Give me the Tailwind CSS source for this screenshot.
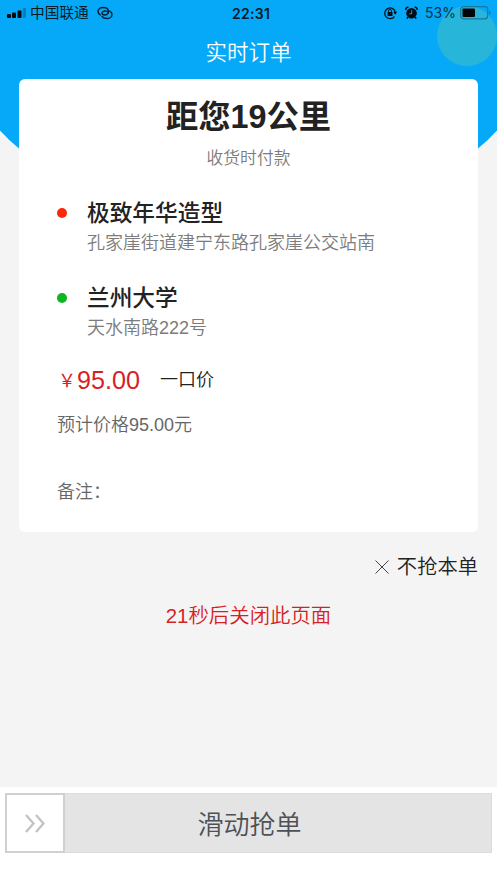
<!DOCTYPE html>
<html lang="zh-CN">
<head>
<meta charset="utf-8">
<meta name="viewport" content="width=device-width, initial-scale=1">
<title>实时订单</title>
<script src="https://cdn.jsdelivr.net/npm/@tailwindcss/browser@4"></script>
</head>
<body class="relative isolate flex h-[883px] w-[497px] flex-col overflow-hidden bg-[#f4f4f4] font-['Liberation_Sans','Noto_Sans_CJK_SC',sans-serif] text-[#222]">
  <!-- curved header background -->
  <svg class="absolute left-0 top-0 -z-10" width="497" height="220" viewBox="0 0 497 220" aria-hidden="true">
    <path d="M0 0H497V130.500Q488 140.500 478 148.500Q380 210 248.500 210Q117 210 19 148.500Q9 140.500 0 130.500Z" fill="#05a9f8"/>
    <circle cx="467" cy="36" r="30" fill="#28b5da"/>
  </svg>

  <header class="relative h-[79px] shrink-0">
    <div class="flex h-[25px] items-center justify-between pl-[7px] pr-[6px] text-[#071a28]">
      <div class="flex w-[225px] items-center">
        <svg width="19" height="10" viewBox="0 0 19 10" fill="#03090e">
          <rect x="0" y="6" width="4" height="4" rx="1"/><rect x="5" y="4.500" width="4" height="5.500" rx="1"/><rect x="10.500" y="2.500" width="4" height="7.500" rx="1"/><rect x="15.700" y="0" width="3.300" height="10" rx="1" fill="#087db7"/>
        </svg>
        <span class="ml-[4px] mt-[2px] text-[14.700px] leading-[25px]">中国联通</span>
        <svg class="ml-[8px]" width="16" height="14" viewBox="0 0 16 14" fill="none" stroke="#062439" stroke-width="1.500" stroke-linecap="round">
          <path d="M3.300 8.900C1.800 8.300 1 7.100 1 5.600C1 3.200 3.300 1.500 6.300 1.500C9.300 1.500 11.400 3.200 11.400 5.500C11.400 7.700 9.700 8.900 7.400 8.900C5.800 8.900 5 8.100 5 7.100C5 6.200 5.900 5.500 7.300 5.100"/>
          <path d="M12.700 5.100C14.200 5.700 15 6.900 15 8.400C15 10.800 12.700 12.500 9.700 12.500C7.600 12.500 5.900 11.700 5.100 10.500M7.300 5.100C9.500 4.700 11.200 5.500 11.200 7"/>
        </svg>
      </div>
      <span class="mt-px font-['Inter',sans-serif] text-[14px] font-semibold leading-[25px] tracking-[.3px]">22:31</span>
      <div class="flex flex-1 items-center justify-end">
        <svg width="15" height="14" viewBox="0 0 15 14" fill="none" stroke="#06131d" stroke-width="1.300">
          <path d="M11.500 10.500A5.400 5.400 0 1 1 12.300 5.700"/><path d="M10.200 5.800H14.200L12.200 8.700Z" fill="#06131d" stroke="none"/>
          <rect x="4.500" y="6" width="5" height="4" rx=".5" fill="#06131d" stroke="none"/><path d="M5.500 6.300V5Q5.500 3.400 7 3.400T8.500 5V6.300" stroke-width="1"/>
        </svg>
        <svg class="ml-[7px]" width="13" height="14" viewBox="0 0 13 14">
          <circle cx="6.500" cy="7.300" r="5.300" fill="#020c13"/><path d="M.9 3.900Q.5 1.500 3.400 1M12.100 3.900Q12.500 1.500 9.600 1M3 11.200L1.700 12.600M10 11.200L11.300 12.600" fill="none" stroke="#020c13" stroke-width="1.500"/>
          <path d="M6.700 4.300V7.800H4.300" fill="none" stroke="#19a7e8" stroke-width="1"/>
        </svg>
        <span class="ml-[7px] font-['Inter',sans-serif] text-[14px] leading-[25px] text-[#0b3144]">53%</span>
        <svg class="ml-[4px]" width="31" height="14" viewBox="0 0 31 14">
          <rect x=".7" y=".6" width="27" height="12.200" rx="3" fill="none" stroke="#17789c" stroke-width="1.200"/><rect x="2.500" y="2.400" width="12.500" height="8.600" rx="1" fill="#020609"/><path d="M29.200 4.600Q30.600 5.100 30.600 6.700T29.200 8.800Z" fill="#17789c"/>
        </svg>
      </div>
    </div>
    <h1 class="pt-[13px] text-center text-[21.500px] font-[350] leading-[30px] text-white">实时订单</h1>
  </header>

  <main class="mx-[19px] h-[453px] shrink-0 rounded-[6px] bg-white px-[38px]">
    <h2 class="pt-[18px] text-center text-[32.300px] font-bold leading-[40px]">距您19公里</h2>
    <p class="mt-[10px] text-center text-[16.800px] font-[350] leading-[24px] text-[#7c7c7c]">收货时付款</p>

    <section class="mt-[26px] flex h-[85px]">
      <i class="mt-[11px] size-[10px] shrink-0 rounded-full bg-[#fa2a09]"></i>
      <div class="ml-[20px]">
        <h3 class="text-[22.700px] font-medium leading-[32px]">极致年华造型</h3>
        <p class="mt-px text-[18px] font-[350] leading-[26px] text-[#7c7c7c]">孔家崖街道建宁东路孔家崖公交站南</p>
      </div>
    </section>
    <section class="flex h-[85px]">
      <i class="mt-[11px] size-[10px] shrink-0 rounded-full bg-[#0bb721]"></i>
      <div class="ml-[20px]">
        <h3 class="text-[22.700px] font-medium leading-[32px]">兰州大学</h3>
        <p class="mt-px text-[18px] font-[350] leading-[26px] text-[#7c7c7c]">天水南路222号</p>
      </div>
    </section>

    <div class="-mt-[3px] flex h-[32px] items-center">
      <span class="w-[20px] pl-px pt-[2px] text-[18px] leading-[32px] text-[#d81f26]">￥</span>
      <span class="w-[83px] text-[25.200px] leading-[32px] text-[#d81f26]">95.00</span>
      <span class="text-[18px] font-[350] leading-[28px]">一口价</span>
    </div>
    <p class="mt-[16px] text-[18px] font-[350] leading-[26px] text-[#666]">预计价格95.00元</p>
    <p class="mt-[41px] text-[18px] font-[350] leading-[26px] text-[#666]">备注：</p>
  </main>

  <button class="mr-[19px] mt-[19px] flex h-[32px] shrink-0 items-center self-end text-[20.300px] font-[350] leading-[32px]">
    <svg class="mr-[8px]" width="14" height="14" viewBox="0 0 14 14" stroke="#444" stroke-width="1"><path d="M.5 .5L13.500 13.500M13.500 .5L.5 13.500"/></svg>不抢本单
  </button>
  <p class="mt-[17px] text-center text-[20.400px] font-[350] leading-[32px] text-[#d81f26]">21秒后关闭此页面</p>

  <footer class="mt-auto h-[96px] bg-white px-[5px] pt-[6px]">
    <div class="relative flex h-[60px] items-center justify-center border border-[#dcdcdc] bg-[#e4e4e4]">
      <span class="pl-[2px] pt-[3px] text-[26px] font-[350] leading-[40px] text-[#4e5057]">滑动抢单</span>
      <div class="absolute -left-px -top-px flex size-[60px] items-center justify-center border-2 border-[#d0d0d0] bg-white">
        <svg width="20" height="19" viewBox="0 0 20 19" fill="none" stroke="#c2c2c2" stroke-width="2.300"><path d="M1 1L8.500 9.500L1 18M11 1L18.500 9.500L11 18"/></svg>
      </div>
    </div>
  </footer>
</body>
</html>
